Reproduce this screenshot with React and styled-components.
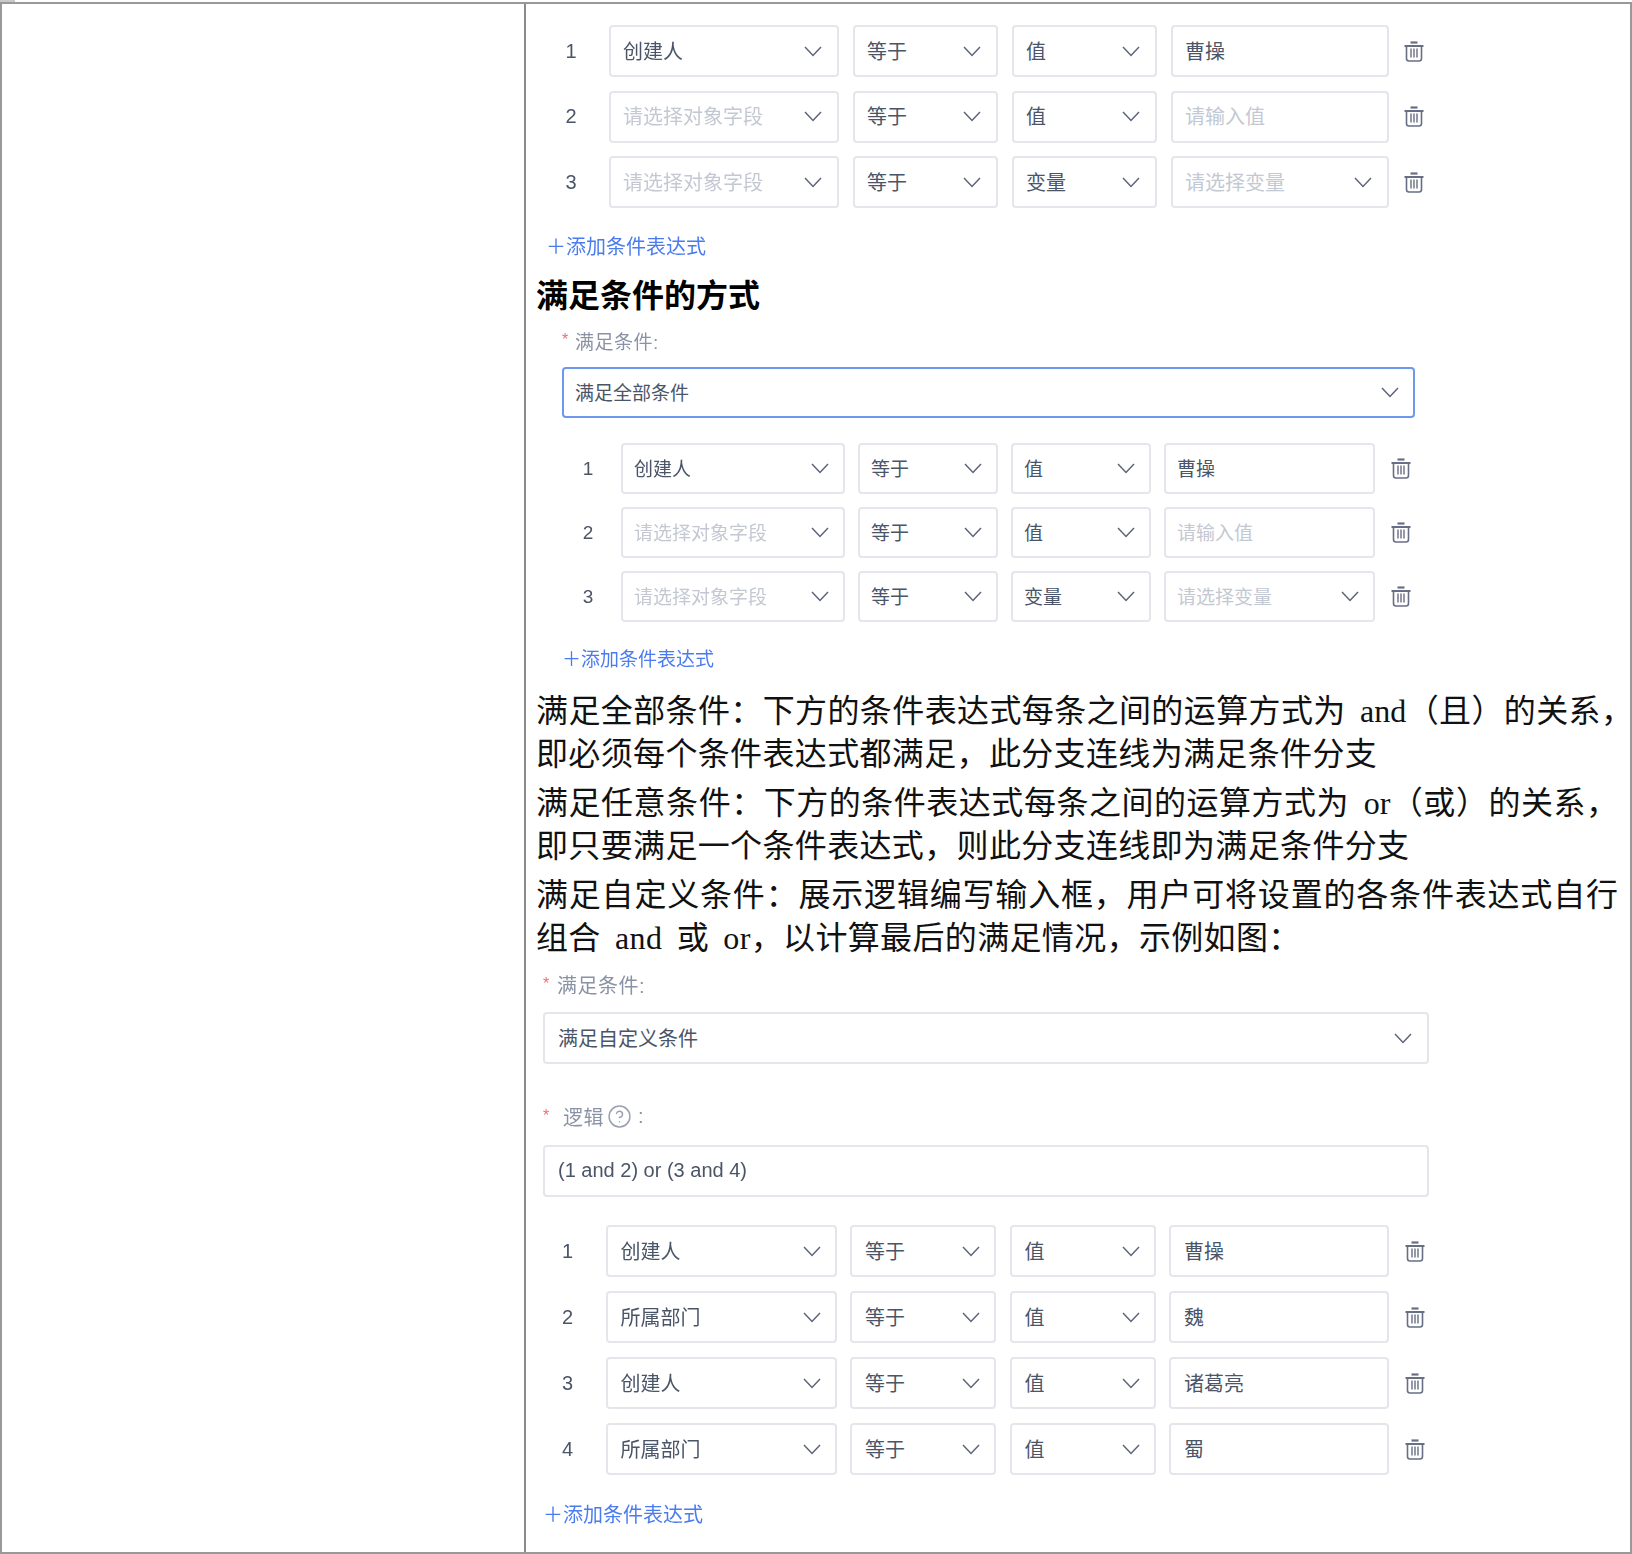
import React from "react";
import styled, { createGlobalStyle } from "styled-components";
import { CircleHelp } from "lucide-react";

const Global = createGlobalStyle`
  html, body { margin: 0; padding: 0; background: #fff; }
  #root { width: 1632px; }
  * { box-sizing: border-box; }
`;

const UI_FONT = `"Liberation Sans", "Noto Sans CJK SC", sans-serif`;
const DOC_FONT = `"Liberation Serif", "Noto Sans CJK SC", serif`;

const ADD_TEXT = "\uFF0B添加条件表达式";
const PARAS = [
  {
    top: 16,
    width: 1097,
    first: "满足全部条件\uFF1A下方的条件表达式每条之间的运算方式为 and\uFF08且\uFF09的关系\uFF0C",
    rest: "即必须每个条件表达式都满足\uFF0C此分支连线为满足条件分支",
  },
  {
    top: 6,
    width: 1082,
    first: "满足任意条件\uFF1A下方的条件表达式每条之间的运算方式为 or\uFF08或\uFF09的关系\uFF0C",
    rest: "即只要满足一个条件表达式\uFF0C则此分支连线即为满足条件分支",
  },
  {
    top: 6,
    width: 1082,
    first: "满足自定义条件\uFF1A展示逻辑编写输入框\uFF0C用户可将设置的各条件表达式自行",
    rest: "组合 and 或 or\uFF0C以计算最后的满足情况\uFF0C示例如图\uFF1A",
  },
];

const Stub = styled.div`
  width: 15px;
  height: 2px;
  background: #c9c9c9;
`;
const Table = styled.div`
  display: grid;
  grid-template-columns: 524px 1fr;
  height: 1552px;
  border: 2px solid #999;
`;
const EmptyCell = styled.div`
  border-right: 2px solid #8a8a8a;
`;
const ContentCell = styled.div`
  display: flex;
  flex-direction: column;
  align-items: flex-start;
  padding-top: 21px;
  min-width: 0;
`;
const Shot = styled.div`
  display: flex;
  flex-direction: column;
  align-items: flex-start;
  font-family: ${UI_FONT};
  font-size: ${(p) => p.$font || 20}px;
  color: #4a5568;
  filter: blur(0.35px);
  margin-top: ${(p) => p.$top || 0}px;
  padding-left: ${(p) => p.$left || 0}px;
`;
const Rows = styled.div`
  display: grid;
  grid-template-columns: ${(p) => p.$cols};
  column-gap: ${(p) => p.$gap}px;
  row-gap: ${(p) => p.$rowGap}px;
  align-items: center;
  margin-top: ${(p) => p.$top || 0}px;
  margin-left: ${(p) => p.$left || 0}px;
`;
const Num = styled.div`
  text-align: center;
`;
const Field = styled.div`
  display: flex;
  align-items: center;
  justify-content: space-between;
  width: ${(p) => (p.$width ? `${p.$width}px` : "auto")};
  height: ${(p) => p.$h}px;
  padding: 0 ${(p) => p.$right || 15}px 0 ${(p) => p.$inset || 12}px;
  margin-top: ${(p) => p.$top || 0}px;
  background: #fff;
  border: 2px solid ${(p) => (p.$focus ? "#6f97f0" : "#e5e6eb")};
  border-radius: 4px;
`;
const FieldText = styled.span`
  white-space: nowrap;
  margin-bottom: 2px;
  color: ${(p) => (p.$ph ? "#c3c8d2" : "#4a5568")};
`;
const ChevronSvg = styled.svg`
  flex: none;
  width: 18px;
  height: 11px;
  fill: none;
  stroke: #5c6478;
  stroke-width: 1.5;
`;
const Chevron = () => (
  <ChevronSvg viewBox="0 0 18 11">
    <path d="M1 1 L9 9.5 L17 1" />
  </ChevronSvg>
);
const TrashSvg = styled.svg`
  display: block;
  justify-self: center;
  width: 20px;
  height: 21px;
  fill: none;
  stroke: #666f83;
  stroke-width: 1.6;
`;
const Trash = () => (
  <TrashSvg viewBox="0 0 20 21">
    <path d="M6.5 1.5 H13.5" strokeWidth="2.2" />
    <path d="M0.5 5 H19.5" strokeWidth="2" />
    <path d="M2.5 5 V17.5 Q2.5 20 5 20 H15 Q17.5 20 17.5 17.5 V5" />
    <path d="M7 7.5 V16.5 M10 7.5 V16.5 M13 7.5 V16.5" strokeWidth="1.4" />
  </TrashSvg>
);
const AddLink = styled.div`
  height: 28px;
  line-height: 28px;
  font-family: ${UI_FONT};
  font-size: ${(p) => p.$font || 20}px;
  color: #4a7cf0;
  white-space: nowrap;
  filter: blur(0.3px);
  margin-top: ${(p) => p.$top}px;
  margin-left: ${(p) => p.$left}px;
`;
const Heading = styled.h2`
  margin: 14px 0 0 10px;
  font-family: ${DOC_FONT};
  font-size: 32px;
  font-weight: 700;
  line-height: 42px;
  color: #000;
`;
const Para = styled.p`
  margin: ${(p) => p.$top}px 0 0 10px;
  font-family: ${DOC_FONT};
  font-size: 32px;
  line-height: 43px;
  color: #111;
  word-spacing: 6px;
`;
const JustifiedLine = styled.span`
  display: block;
  width: ${(p) => p.$width}px;
  text-align: justify;
  text-align-last: justify;
`;
const TailLine = styled.span`
  display: block;
  letter-spacing: 0.35px;
  white-space: nowrap;
`;
const Label = styled.div`
  display: flex;
  align-items: center;
  height: 24px;
  color: #8a93a5;
  letter-spacing: 0.5px;
  margin-top: ${(p) => p.$top || 0}px;
  margin-left: ${(p) => p.$left || 0}px;
  transform: translateY(-1px);
`;
const Star = styled.span`
  color: #f56c6c;
  font-size: 16px;
  width: ${(p) => p.$w}px;
`;
const HelpIcon = styled(CircleHelp)`
  width: 25px;
  height: 25px;
  margin: 0 6px 0 3px;
  color: #9aa1b0;
  stroke-width: 1.4;
`;

const ConditionRows = ({ rows, h, cols, gap, rowGap, top, left, right, inset }) => (
  <Rows $cols={cols} $gap={gap} $rowGap={rowGap} $top={top} $left={left}>
    {rows.map((r, i) => (
      <React.Fragment key={i}>
        <Num>{i + 1}</Num>
        <Field $h={h} $right={right} $inset={inset}>
          <FieldText $ph={!r.field}>{r.field || "请选择对象字段"}</FieldText>
          <Chevron />
        </Field>
        <Field $h={h} $right={right} $inset={inset}>
          <FieldText>等于</FieldText>
          <Chevron />
        </Field>
        <Field $h={h} $right={right} $inset={inset}>
          <FieldText>{r.kind || "值"}</FieldText>
          <Chevron />
        </Field>
        <Field $h={h} $right={right} $inset={inset}>
          <FieldText $ph={!r.value}>
            {r.value || (r.kind ? "请选择变量" : "请输入值")}
          </FieldText>
          {r.kind && <Chevron />}
        </Field>
        <Trash />
      </React.Fragment>
    ))}
  </Rows>
);

const basicRows = [{ field: "创建人", value: "曹操" }, {}, { kind: "变量" }];
const customRows = [
  { field: "创建人", value: "曹操" },
  { field: "所属部门", value: "魏" },
  { field: "创建人", value: "诸葛亮" },
  { field: "所属部门", value: "蜀" },
];

export default function App() {
  return (
    <>
      <Global />
      <Stub />
      <Table>
        <EmptyCell />
        <ContentCell>
          <Shot>
            <ConditionRows
              rows={basicRows}
              h={52}
              cols="48px 230px 145px 145px 218px 22px"
              gap={14}
              rowGap={13.5}
              left={21}
            />
          </Shot>
          <AddLink $top={25} $left={20}>{ADD_TEXT}</AddLink>
          <Heading>满足条件的方式</Heading>
          <Shot $top={12} $left={36} $font={19}>
            <Label>
              <Star $w={13}>*</Star>满足条件:
            </Label>
            <Field $h={51} $width={853} $top={14} $focus $right={14} $inset={11}>
              <FieldText>满足全部条件</FieldText>
              <Chevron />
            </Field>
            <ConditionRows
              rows={basicRows}
              h={51}
              cols="40px 224px 140px 140px 211px 26px"
              gap={13}
              rowGap={13}
              top={25}
              left={6}
              right={14}
              inset={11}
            />
          </Shot>
          <AddLink $top={24} $left={36} $font={19}>{ADD_TEXT}</AddLink>
          {PARAS.map((p) => (
            <Para key={p.first} $top={p.top}>
              <JustifiedLine $width={p.width}>{p.first}</JustifiedLine>
              <TailLine>{p.rest}</TailLine>
            </Para>
          ))}
          <Shot $top={13} $left={17}>
            <Label>
              <Star $w={14}>*</Star>满足条件:
            </Label>
            <Field $h={52} $width={886} $top={15} $inset={13}>
              <FieldText>满足自定义条件</FieldText>
              <Chevron />
            </Field>
            <Label $top={41}>
              <Star $w={20}>*</Star>逻辑<HelpIcon />:
            </Label>
            <Field $h={52} $width={886} $top={16} $inset={13}>
              <FieldText>(1 and 2) or (3 and 4)</FieldText>
            </Field>
            <ConditionRows
              rows={customRows}
              h={52}
              cols="49px 231px 146px 146px 220px 24px"
              gap={13.5}
              rowGap={14}
              top={28}
              left={0}
              right={14}
              inset={13}
            />
          </Shot>
          <AddLink $top={26} $left={17}>{ADD_TEXT}</AddLink>
        </ContentCell>
      </Table>
    </>
  );
}
